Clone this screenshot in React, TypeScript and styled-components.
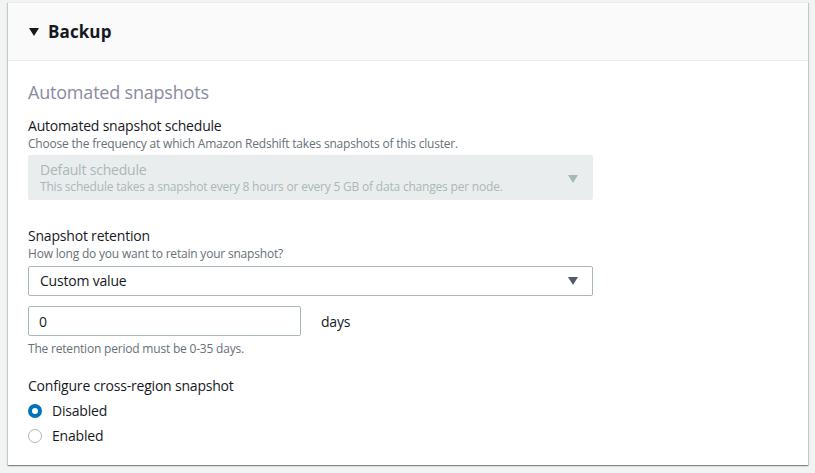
import React from "react";
import styled, { createGlobalStyle } from "styled-components";

const Global = createGlobalStyle`
  html, body { margin: 0; padding: 0; background: #f2f3f3; }
  body { font-family: "Open Sans", "Noto Sans", sans-serif; color: #16191f; letter-spacing: -0.2px; }
  * { box-sizing: border-box; }
`;

const Page = styled.div`
  padding: 2px 7px 7px 8px;
`;

const Card = styled.section`
  background: #fff;
  box-shadow: 0 1px 1px 0 rgba(0, 28, 36, 0.3), 1px 1px 1px 0 rgba(0, 28, 36, 0.15), -1px 1px 1px 0 rgba(0, 28, 36, 0.15);
  border-top: 1px solid #eaeded;
`;

const Header = styled.header`
  height: 58px;
  background: #fafafa;
  border-bottom: 1px solid #eaeded;
  display: flex;
  align-items: center;
  gap: 9px;
  padding-left: 21px;
`;

const Title = styled.h2`
  margin: 0;
  font-size: 17px;
  font-weight: 700;
  color: #16191f;
  letter-spacing: 0.1px;
`;

const Body = styled.div`
  padding: 20px 20px 17px 20px;
  display: flex;
  flex-direction: column;
`;

const SectionTitle = styled.h3`
  margin: 0 0 13px;
  font-size: 18px;
  font-weight: 400;
  color: #8b8ba0;
  line-height: 22px;
`;

const Field = styled.div<{ $mb?: number }>`
  display: flex;
  flex-direction: column;
  margin-bottom: ${(p) => p.$mb ?? 0}px;
`;

const Label = styled.div<{ $mb?: number }>`
  font-size: 14px;
  line-height: 20px;
  color: #16191f;
  margin-bottom: ${(p) => p.$mb ?? 0}px;
`;

const Desc = styled.div<{ $mb?: number }>`
  font-size: 12px;
  line-height: 16px;
  color: #687078;
  margin-bottom: ${(p) => p.$mb ?? 0}px;
`;

const SelectBox = styled.div<{ $disabled?: boolean }>`
  width: 565px;
  display: flex;
  align-items: center;
  justify-content: space-between;
  padding: 0 14px 0 11px;
  border: 1px solid ${(p) => (p.$disabled ? "#eaeded" : "#aab7b8")};
  background: ${(p) => (p.$disabled ? "#eaeded" : "#fff")};
  border-radius: 2px;
  height: ${(p) => (p.$disabled ? 45 : 30)}px;
  color: ${(p) => (p.$disabled ? "#aab7b8" : "#16191f")};
`;

const SelectText = styled.div`
  display: flex;
  flex-direction: column;
`;

const OptMain = styled.div`
  font-size: 14px;
  line-height: 18px;
`;

const OptSub = styled.div`
  font-size: 12px;
  line-height: 16px;
`;

const Arrow = styled.span<{ $disabled?: boolean }>`
  width: 0;
  height: 0;
  border-left: 5px solid transparent;
  border-right: 5px solid transparent;
  border-top: 8px solid ${(p) => (p.$disabled ? "#aab7b8" : "#545b64")};
  margin-top: ${(p) => (p.$disabled ? 2 : 0)}px;
`;

const HeaderArrow = styled.span`
  width: 0;
  height: 0;
  border-left: 5px solid transparent;
  border-right: 5px solid transparent;
  border-top: 8px solid #16191f;
`;

const InputRow = styled.div`
  display: flex;
  align-items: center;
  gap: 20px;
  margin-top: 10px;
  margin-bottom: 5px;
`;

const Input = styled.div`
  width: 273px;
  height: 30px;
  border: 1px solid #aab7b8;
  border-radius: 2px;
  padding-left: 10px;
  display: flex;
  align-items: center;
  font-size: 14px;
  color: #16191f;
`;

const Unit = styled.span`
  font-size: 14px;
  color: #16191f;
`;

const RadioRow = styled.div`
  display: flex;
  align-items: center;
  gap: 10px;
  height: 25px;
  font-size: 14px;
`;

const Radio = styled.span<{ $checked?: boolean }>`
  width: 14px;
  height: 14px;
  border-radius: 50%;
  border: ${(p) => (p.$checked ? "4px solid #0073bb" : "1px solid #aab7b8")};
  background: #fff;
`;

export default function App() {
  return (
    <>
      <Global />
      <Page>
        <Card>
          <Header>
            <HeaderArrow />
            <Title>Backup</Title>
          </Header>
          <Body>
            <SectionTitle>Automated snapshots</SectionTitle>
            <Field $mb={26}>
              <Label>Automated snapshot schedule</Label>
              <Desc $mb={3}>Choose the frequency at which Amazon Redshift takes snapshots of this cluster.</Desc>
              <SelectBox $disabled>
                <SelectText>
                  <OptMain>Default schedule</OptMain>
                  <OptSub>This schedule takes a snapshot every 8 hours or every 5 GB of data changes per node.</OptSub>
                </SelectText>
                <Arrow $disabled />
              </SelectBox>
            </Field>
            <Field $mb={19}>
              <Label>Snapshot retention</Label>
              <Desc $mb={4}>How long do you want to retain your snapshot?</Desc>
              <SelectBox>
                <OptMain>Custom value</OptMain>
                <Arrow />
              </SelectBox>
              <InputRow>
                <Input>0</Input>
                <Unit>days</Unit>
              </InputRow>
              <Desc>The retention period must be 0-35 days.</Desc>
            </Field>
            <Field>
              <Label $mb={2}>Configure cross-region snapshot</Label>
              <RadioRow>
                <Radio $checked />
                Disabled
              </RadioRow>
              <RadioRow>
                <Radio />
                Enabled
              </RadioRow>
            </Field>
          </Body>
        </Card>
      </Page>
    </>
  );
}
